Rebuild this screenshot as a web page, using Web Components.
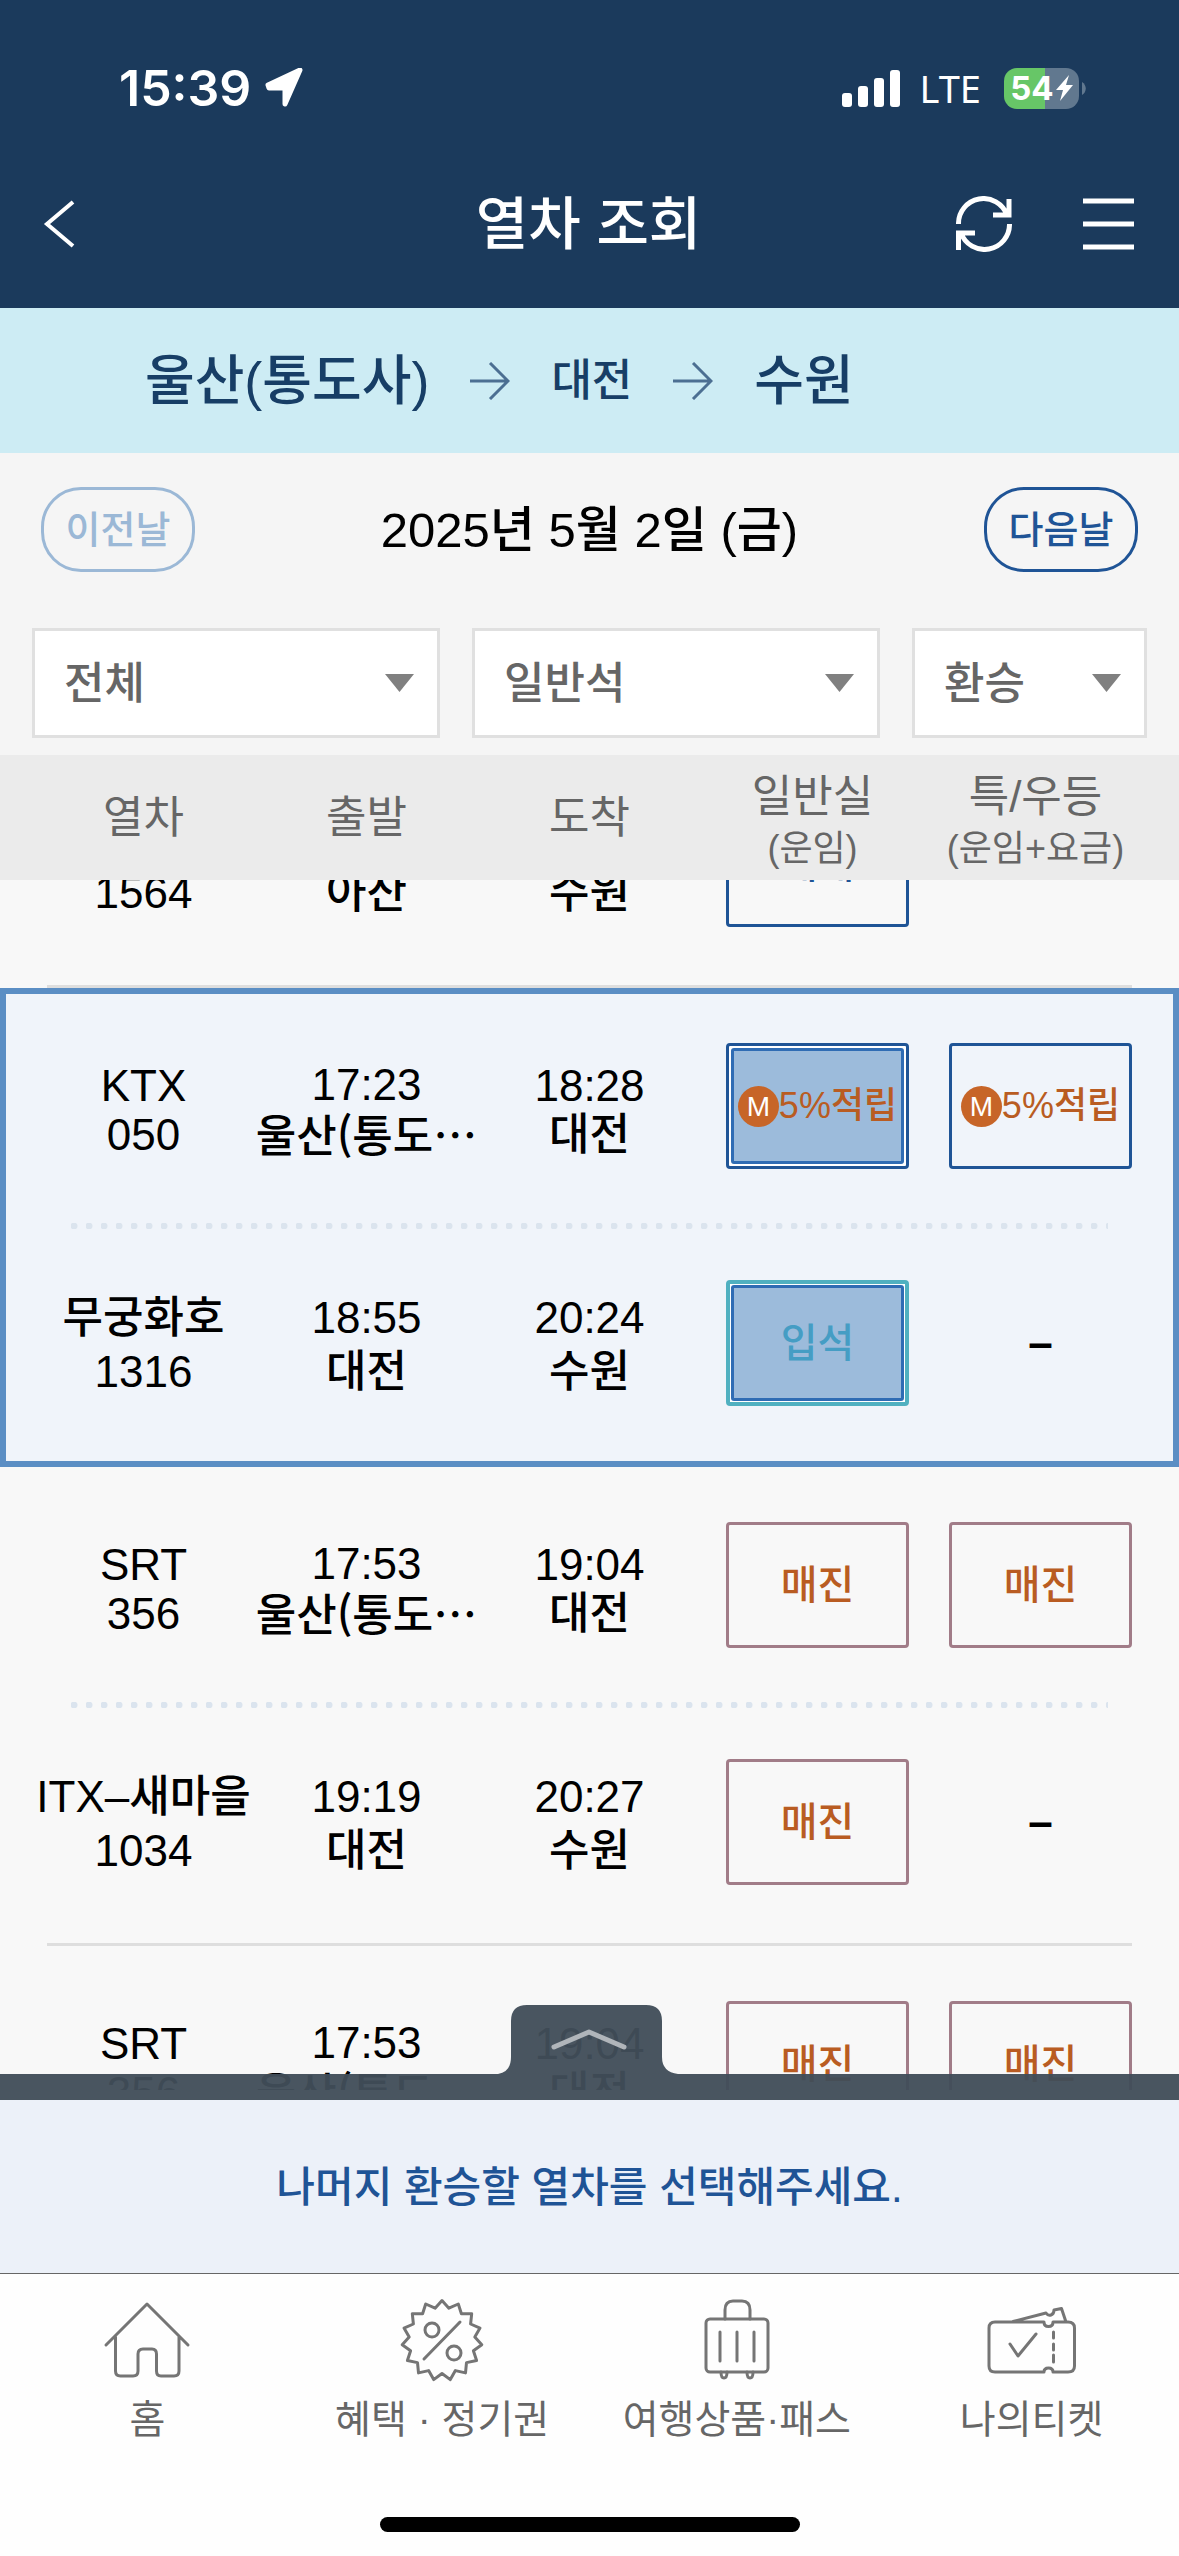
<!DOCTYPE html>
<html lang="ko">
<head>
<meta charset="utf-8">
<meta name="viewport" content="width=device-width">
<title>열차 조회</title>
<style>
  body { margin: 0; font-family: "Liberation Sans", "Noto Sans CJK KR", sans-serif; font-weight: 500; color: #000; }
</style>
</head>
<body>
<train-app></train-app>
<script>
const define = (name, html, setup) => {
  const template = document.createElement('template');
  template.innerHTML = `<style>:host{display:block;box-sizing:border-box}*{box-sizing:border-box}svg{display:block;fill:none}button{font:inherit;color:inherit;background:none;border:0;padding:0;margin:0}</style>` + html;
  customElements.define(name, class extends HTMLElement {
    constructor() {
      super();
      this.attachShadow({ mode: 'open' }).append(template.content.cloneNode(true));
    }
    connectedCallback() { if (setup) setup(this, this.shadowRoot); }
  });
};

/* Phone status bar */
define('status-bar', `
<style>
  :host { display: flex; align-items: center; height: 140px; padding: 36px 93px 0 119px; color: #fff; font-family: Inter, sans-serif; }
  .time { font-size: 50px; font-weight: 600; line-height: 58px; }
  .arrow { margin-left: 14px; }
  .right { display: flex; align-items: center; margin-left: auto; }
  .lte { font: 400 38px/54px "Noto Sans", sans-serif; margin: 0 23px 0 20px; }
  .battery { width: 75px; height: 41px; border-radius: 13px; background: linear-gradient(90deg, #67c667 41px, #61788f 41px); display: flex; align-items: center; justify-content: center; font-size: 33px; font-weight: 700; gap: 2px; }
  .nub { margin-left: 3px; }
</style>
<span class="time">15:39</span>
<svg class="arrow" width="40" height="40" viewBox="0 0 40 40"><path d="M3 17 35 2 20 36V20H4Z" fill="#fff" stroke="#fff" stroke-width="5" stroke-linejoin="round"/></svg>
<div class="right">
  <svg width="58" height="38" viewBox="0 0 58 38"><g fill="#fff"><rect y="24" width="10" height="14" rx="3"/><rect x="16" y="17" width="10" height="21" rx="3"/><rect x="32" y="9" width="10" height="29" rx="3"/><rect x="48" y="1" width="10" height="37" rx="3"/></g></svg>
  <span class="lte">LTE</span>
  <span class="battery">54<svg width="17" height="26" viewBox="0 0 17 26"><path d="M13 0 0 15h7L4 26 17 10h-7z" fill="#fff"/></svg></span>
  <svg class="nub" width="4" height="13" viewBox="0 0 4 13"><path d="M0 0C5 3 5 10 0 13z" fill="#61788f"/></svg>
</div>`);

/* Title bar with back, refresh and menu */
define('nav-bar', `
<style>
  :host { display: grid; grid-template-columns: 1fr auto 1fr; align-items: center; height: 168px; padding: 0 45px 0 43px; color: #fff; }
  h1 { margin: 0; font-size: 57px; font-weight: 500; line-height: 80px; }
  .right { display: flex; justify-content: flex-end; align-items: center; gap: 71px; }
</style>
<button aria-label="뒤로"><svg width="32" height="50" viewBox="0 0 32 50"><path d="M30 3 4 25 30 47" stroke="#fff" stroke-width="4"/></svg></button>
<h1><slot></slot></h1>
<div class="right">
  <button aria-label="새로고침"><svg width="56" height="56" viewBox="0 0 56 56" stroke="#fff" stroke-width="5"><path d="M2.500 28A25 25 0 0 1 51 19M53.500 28A25 25 0 0 1 5 37M53 3V19H37M2.500 54V37H19"/></svg></button>
  <button aria-label="메뉴"><svg width="51" height="52" viewBox="0 0 51 52" stroke="#fff" stroke-width="5"><path d="M0 3H51M0 26H51M0 49H51"/></svg></button>
</div>`);

/* Journey: origin, transfer and destination */
define('route-bar', `
<style>
  :host { display: flex; align-items: center; gap: 41px; height: 145px; padding: 0 145px; background: #cdecf4; color: #173e66; font-size: 54px; line-height: 76px; white-space: nowrap; }
  small { font-size: 44px; }
</style>
<span>울산(통도사)</span>
<svg width="40" height="38" viewBox="0 0 40 38"><path d="M0 19H38M20 1 38 19 20 37" stroke="#4c6f92" stroke-width="3"/></svg>
<small>대전</small>
<svg width="40" height="38" viewBox="0 0 40 38"><path d="M0 19H38M20 1 38 19 20 37" stroke="#4c6f92" stroke-width="3"/></svg>
<span>수원</span>`);

/* Date with the previous and next day */
define('day-picker', `
<style>
  :host { display: flex; align-items: center; justify-content: space-between; padding: 34px 41px 0; font-size: 49px; line-height: 70px; }
  button { width: 154px; height: 85px; border: 3px solid #1f5496; border-radius: 40px; color: #1f5496; font-size: 38px; line-height: 56px; }
  button:disabled { border-color: #9bb8d6; color: #9bb8d6; }
</style>
<button disabled>이전날</button><time datetime="2025-05-02">2025년 5월 2일 (금)</time><button>다음날</button>`);

/* Drop-down with its own triangle */
define('filter-select', `
<style>
  :host { display: grid; align-items: center; }
  select, svg { grid-area: 1 / 1; }
  select { appearance: none; width: 100%; height: 110px; margin: 0; padding: 0 29px; border: 3px solid #e0e0e0; border-radius: 0; background: #fff; color: #666; font: inherit; font-size: 44px; }
  svg { justify-self: end; margin-right: 26px; pointer-events: none; }
</style>
<select><option></option></select>
<svg width="29" height="18" viewBox="0 0 29 18"><path d="M0 0H29L14.500 18Z" fill="#808080"/></svg>`,
(host, root) => {
  const select = root.querySelector('select');
  select.setAttribute('aria-label', host.getAttribute('label'));
  select.options[0].textContent = host.getAttribute('value');
});

define('filter-row', `
<style>
  :host { display: grid; grid-template-columns: 408fr 408fr 235fr; gap: 32px; padding: 56px 32px 17px; }
</style>
<filter-select label="열차 종류" value="전체"></filter-select>
<filter-select label="좌석" value="일반석"></filter-select>
<filter-select label="여정" value="환승"></filter-select>`);

/* Seat state: open | standing | soldout, optionally picked and with mileage */
define('seat-chip', `
<style>
  :host { --line: #1f5496; --ink: #1f5496; }
  :host([kind=standing]) { --line: #50b0c0; --ink: #459dc4; }
  :host([kind=soldout]) { --line: #a17c88; --ink: #b95c22; }
  :host([mile]) { --ink: #b95c22; }
  button { display: flex; width: 100%; height: 126px; padding: 0; border: 3px solid var(--line); border-radius: 4px; color: var(--ink); font-size: 40px; line-height: 60px; }
  span { flex: 1; align-self: stretch; display: flex; align-items: center; justify-content: center; white-space: nowrap; }
  :host([mile]) span { font-size: 36px; }
  :host([picked]) button { padding: 2px; background: #fff; }
  :host([picked]) span { border: 3px solid #2f6cb4; border-radius: 3px; background: #9cbbdb; }
  :host([kind=standing]) button { border-width: 4px; padding: 1px; }
  i { display: none; width: 41px; height: 41px; border-radius: 50%; background: #c76528; color: #fff; font-style: normal; font-size: 28px; line-height: 41px; text-align: center; }
  :host([mile]) i { display: block; }
</style>
<button><span><i>M</i><slot></slot></span></button>`);

/* Timetable of transfer journeys; each tbody is one journey */
define('train-table', `
<style>
  :host { flex: 1; min-height: 0; overflow-y: auto; scrollbar-width: none; background: #f8f8f8; margin-bottom: 10px; }
  table, tbody, thead { display: block; }
  tr { display: grid; grid-template-columns: repeat(5, 1fr); padding: 0 32px; align-items: center; }
  td, th { padding: 0; text-align: center; white-space: nowrap; font-weight: inherit; display: flex; flex-direction: column; align-items: center; }
  thead { position: sticky; top: 0; z-index: 1; background: #ebebeb; color: #666; font-size: 44px; font-weight: 400; line-height: 52px; }
  thead tr { height: 125px; }
  th:has(small) { padding-top: 10px; }
  small { font-size: 36px; }
  tbody { font-size: 44px; line-height: 54px; }
  tbody tr:first-child:not(:last-child) { line-height: 49px; padding-top: 55px; padding-bottom: 54px; }
  tbody tr:last-child { padding-top: 51px; padding-bottom: 58px; }
  tbody tr:first-child:not(:last-child) div { padding-top: 8px; }
  tbody tr:last-child td:not(.none) div { padding-top: 4px; }
  tbody tr.dots { display: block; padding: 0 71px; }
  .dots td { display: block; height: 6px; background: radial-gradient(circle at 3px 3px, #dbe4ee 3px, #dbe4ee00 4px) 0 0 / 15px 6px; }
  .dots div { display: none; }
  tbody::after { content: ""; display: block; height: 3px; margin: 0 47px; background: #dedede; }
  tbody.picked { background: #f0f4fa; outline: 6px solid #5b8ec4; outline-offset: -6px; }
  tbody.picked::after { visibility: hidden; }
  td:has(seat-chip) { padding: 0 15px 0 25px; align-items: stretch; }
  td.none { padding-left: 10px; font-weight: 700; }
  b { font: 500 44px/49px "Noto Sans CJK KR", sans-serif; }
</style>
<table>
  <thead><tr>
    <th>열차</th><th>출발</th><th>도착</th><th>일반실<small>(운임)</small></th><th>특/우등<small>(운임+요금)</small></th>
  </tr></thead>
  <tbody>
    <tr><td><br>1564</td><td><br>아산</td><td><br>수원</td><td><seat-chip>예매</seat-chip></td><td></td></tr>
  </tbody>
  <tbody class="picked">
    <tr><td>KTX<br>050</td><td>17:23<br><b>울산(통도…</b></td><td>18:28<br>대전</td><td><seat-chip mile picked>5%적립</seat-chip></td><td><seat-chip mile>5%적립</seat-chip></td></tr>
    <tr class="dots"><td colspan="5"></td></tr>
    <tr><td>무궁화호<br>1316</td><td>18:55<br>대전</td><td>20:24<br>수원</td><td><seat-chip kind="standing" picked>입석</seat-chip></td><td class="none">–</td></tr>
  </tbody>
  <tbody>
    <tr><td>SRT<br>356</td><td>17:53<br><b>울산(통도…</b></td><td>19:04<br>대전</td><td><seat-chip kind="soldout">매진</seat-chip></td><td><seat-chip kind="soldout">매진</seat-chip></td></tr>
    <tr class="dots"><td colspan="5"></td></tr>
    <tr><td>ITX–새마을<br>1034</td><td>19:19<br>대전</td><td>20:27<br>수원</td><td><seat-chip kind="soldout">매진</seat-chip></td><td class="none">–</td></tr>
  </tbody>
  <tbody>
    <tr><td>SRT<br>356</td><td>17:53<br><b>울산(통도…</b></td><td>19:04<br>대전</td><td><seat-chip kind="soldout">매진</seat-chip></td><td><seat-chip kind="soldout">매진</seat-chip></td></tr>
    <tr class="dots"><td colspan="5"></td></tr>
  </tbody>
</table>`,
(host, root) => {
  /* td is a column flex box: wrap each text cell's lines so <br> keeps working */
  root.querySelectorAll('tbody td:not(:has(seat-chip))').forEach(td => {
    const box = document.createElement('div');
    box.append(...td.childNodes);
    td.append(box);
  });
  requestAnimationFrame(() => { host.scrollTop = 130; });
  host.scrollTop = 130;
});

/* Pull-up sheet; its handle lies over the timetable */
define('bottom-sheet', `
<style>
  :host { position: relative; z-index: 2; background: #ecf1f9; color: #1f5496; }
  .handle { position: absolute; left: 0; right: 0; bottom: 100%; display: flex; align-items: flex-end; width: 100%; }
  .edge { flex: 1; height: 26px; background: #414d59f4; }
  p { margin: 0; padding: 58px 0 55px; text-align: center; font-size: 42px; line-height: 60px; }
</style>
<button class="handle" aria-label="펼치기">
  <span class="edge"></span>
  <svg width="183" height="95" viewBox="0 0 183 95"><path d="M0 95V69Q13 67 13 52V16Q13 0 29 0H148Q164 0 164 16V52Q164 67 180 69H183V95Z" fill="#414d59f4"/><path d="M56 42 91 27 126 42" stroke="#b0b5ba" stroke-width="5" stroke-linecap="round" stroke-linejoin="round"/></svg>
  <span class="edge"></span>
</button>
<p><slot></slot></p>`);

/* Bottom tabs */
define('tab-bar', `
<style>
  :host { height: 283px; border-top: 1px solid #666; background: #fefefe; color: #666; display: flex; flex-direction: column; }
  nav { display: grid; grid-template-columns: repeat(4, 1fr); padding-top: 23px; }
  a { display: flex; flex-direction: column; align-items: center; gap: 9px; color: inherit; text-decoration: none; font-size: 39px; font-weight: 400; line-height: 56px; white-space: nowrap; }
  svg { stroke: #757575; stroke-width: 3; stroke-linecap: round; stroke-linejoin: round; }
  .home { width: 420px; height: 15px; margin: auto auto 24px; border-radius: 8px; background: #000; }
</style>
<nav>
  <a href="#home"><svg width="90" height="86" viewBox="0 0 90 86"><path d="M4 48 45 7 86 48M13.500 40V74Q13.500 79 18.500 79H31Q36 79 36 74V57Q36 52 41 52H50Q54.500 52 54.500 57V74Q54.500 79 59 79H72Q77 79 77 74V40"/></svg>홈</a>
  <a href="#benefit"><svg class="badge" width="90" height="86" viewBox="0 0 90 86"><circle cx="35" cy="33" r="7"/><circle cx="57" cy="56" r="7"/><path d="M27 62 63 25"/></svg>혜택 · 정기권</a>
  <a href="#travel"><svg width="90" height="86" viewBox="0 0 90 86"><rect x="14" y="22" width="62" height="53" rx="4"/><path d="M33 22V13Q33 4 41 4H50Q58 4 58 13V22M28 35V64M45 35V64M62 35V64M29 75Q29 81 32 81T35 75M55 75Q55 81 58 81T61 75"/></svg>여행상품·패스</a>
  <a href="#ticket"><svg width="92" height="86" viewBox="0 0 92 86"><path d="M9 25H58Q58 29.500 62.500 29.500T67 25H82Q88.500 25 88.500 31V69Q88.500 75 82 75H67Q67 71 62.500 71T58 75H9Q3 75 3 69V31Q3 25 9 25ZM27 24.500 60 16Q62 19 65 18T68 13L75.500 11.500 80 25M24 47 32 59 50 37M67.500 35V41M67.500 47V53M67.500 58V65"/></svg>나의티켓</a>
</nav>
<div class="home"></div>`,
(host, root) => {
  /* fifteen-pointed seal around the percent sign */
  const points = [];
  for (let i = 0; i < 30; i++) {
    const r = i % 2 ? 33 : 40, a = Math.PI * i / 15 - Math.PI / 2;
    points.push((45 + r * Math.cos(a)).toFixed(1) + ' ' + (43.5 + r * Math.sin(a)).toFixed(1));
  }
  const seal = document.createElementNS('http://www.w3.org/2000/svg', 'path');
  seal.setAttribute('d', 'M' + points.join('L') + 'Z');
  root.querySelector('.badge').append(seal);
});

define('train-app', `
<style>
  :host { display: flex; flex-direction: column; height: 100vh; background: #f5f5f5; }
  header { background: #1b3a5c; }
</style>
<header><status-bar></status-bar><nav-bar>열차 조회</nav-bar></header>
<route-bar></route-bar>
<day-picker></day-picker>
<filter-row></filter-row>
<train-table></train-table>
<bottom-sheet>나머지 환승할 열차를 선택해주세요.</bottom-sheet>
<tab-bar></tab-bar>`);
</script>
</body>
</html>
